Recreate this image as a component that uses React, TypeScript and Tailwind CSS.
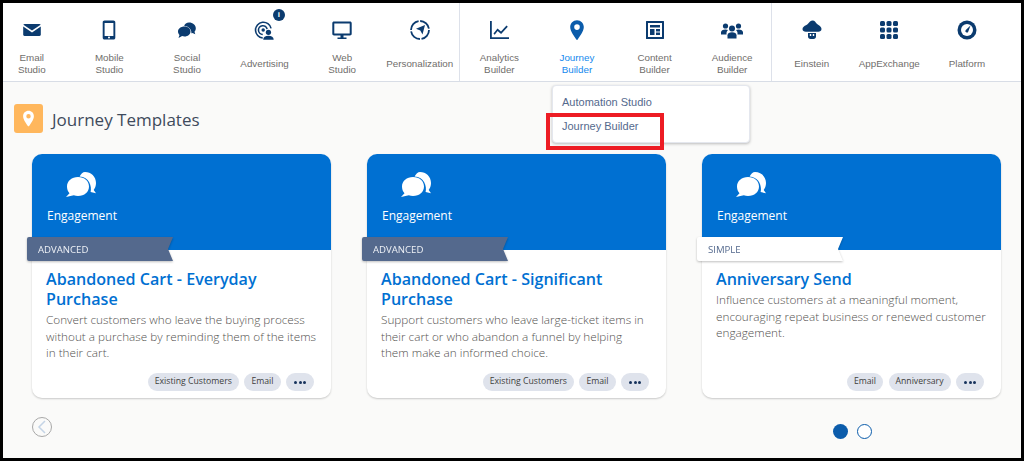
import type { ReactNode } from 'react';

const navy = '#0b3b6f';

function Svg({ children, size = 24 }: { children: ReactNode; size?: number }) {
  return (
    <svg width={size} height={size} viewBox="0 0 24 24" fill={navy}>
      {children}
    </svg>
  );
}

const EmailIcon = () => (
  <Svg size={22}>
    <path d="M4 5.5h16c.8 0 1.2.3 1.4.8L12 12.6 2.6 6.3c.2-.5.6-.8 1.4-.8z" />
    <path d="M2.4 8.2 12 14.7l9.6-6.5v9c0 .8-.6 1.3-1.4 1.3H3.8c-.8 0-1.4-.5-1.4-1.3z" />
  </Svg>
);

const MobileIcon = () => (
  <Svg>
    <path
      fillRule="evenodd"
      d="M7.5 2.5h9c1 0 1.8.8 1.8 1.8v15.4c0 1-.8 1.8-1.8 1.8h-9c-1 0-1.8-.8-1.8-1.8V4.3c0-1 .8-1.8 1.8-1.8zM7.6 5v13h8.8V5zM12 18.6a1 1 0 1 0 0 2 1 1 0 0 0 0-2z"
    />
  </Svg>
);

const SocialIcon = () => (
  <Svg>
    <path d="M9.5 8.5c3.5 0 6 2.2 6 5s-2.5 5-6 5c-.9 0-1.7-.1-2.4-.4L3.5 20l1-3.1C3.5 16 3 14.8 3 13.5c0-2.8 2.8-5 6.5-5z" />
    <path d="M14 4.5c3.8 0 6.8 2.5 6.8 5.7 0 1.5-.5 2.6-1.3 3.5l.8 2.5-2.8-1.3c-.4.2-.7.3-1.1.4.3-2.9-1.7-7-7.2-7.3C9.7 5.8 11.6 4.5 14 4.5z" />
  </Svg>
);

const AdvertisingIcon = () => (
  <Svg size={21}>
    <g fill="none" stroke={navy}>
      <path strokeWidth="1.8" d="M10 20.5a9 9 0 1 1 9.5-11" />
      <path strokeWidth="1.8" d="M10 16.5a5 5 0 1 1 5-6" />
    </g>
    <circle cx="10.5" cy="11.5" r="2" />
    <circle cx="16.5" cy="14" r="3" />
    <path d="M10.5 22.5c0-3 2.5-4.5 6-4.5s6 1.5 6 4.5z" />
  </Svg>
);

const WebIcon = () => (
  <Svg>
    <path
      fillRule="evenodd"
      d="M4 3.5h16c1 0 1.7.7 1.7 1.7v10.6c0 1-.7 1.7-1.7 1.7H4c-1 0-1.7-.7-1.7-1.7V5.2c0-1 .7-1.7 1.7-1.7zM4.3 5.5v10h15.4v-10z"
    />
    <path d="M10.5 17h3v2.500h-3zM7.500 19.500h9V21h-9z" />
  </Svg>
);

const PersonalizationIcon = () => (
  <Svg>
    <circle cx="12" cy="12" r="9" fill="none" stroke={navy} strokeWidth="1.8" strokeDasharray="12.5 1.6" />
    <path d="M17 7l-2.5 9.5-2.2-4-4.3-1.8z" />
  </Svg>
);

const AnalyticsIcon = () => (
  <Svg>
    <path d="M3 3h1.8v16.2H22V21H3z" />
    <path d="m6.5 15.5 4-5 3.5 3 5.5-6 1.3 1.2-6.7 7.3-3.5-3-2.9 3.7z" />
  </Svg>
);

const PinIcon = ({ fill = '#0b5cab', size = 24 }: { fill?: string; size?: number }) => (
  <svg width={size} height={size} viewBox="0 0 24 24" fill={fill}>
    <path
      fillRule="evenodd"
      d="M12 2.2c3.9 0 6.8 3 6.8 6.8 0 4.7-4.6 9.9-6 12.4-.4.6-1.2.6-1.6 0-1.4-2.5-6-7.7-6-12.4 0-3.8 2.9-6.8 6.8-6.8zm0 4.1a2.8 2.8 0 1 0 0 5.6 2.8 2.8 0 0 0 0-5.6z"
    />
  </svg>
);

const ContentIcon = () => (
  <Svg>
    <path
      fillRule="evenodd"
      d="M3.5 3h17c.3 0 .5.2.5.5v17c0 .3-.2.5-.5.5h-17a.5.5 0 0 1-.5-.5v-17c0-.3.2-.5.5-.5zM5 5v14h14V5z"
    />
    <path d="M7 7h10v2.5H7zM7 11h4.5v6H7zM13 11h4v2.5h-4zM13 14.5h4V17h-4z" />
  </Svg>
);

const AudienceIcon = () => (
  <Svg>
    <circle cx="5.5" cy="8" r="2.6" />
    <path d="M1 16.5v-2.3c0-1.5 1.8-2.7 4.5-2.7 1 0 1.8.2 2.5.5-1 .8-1.5 2-1.5 3.2v1.3z" />
    <circle cx="18.5" cy="8" r="2.6" />
    <path d="M23 16.5v-2.3c0-1.5-1.8-2.7-4.5-2.7-1 0-1.8.2-2.5.5 1 .8 1.5 2 1.5 3.2v1.3z" />
    <circle cx="12" cy="10.5" r="3" />
    <path d="M7.5 20.5v-3.3c0-1.7 1.8-2.9 4.5-2.9s4.5 1.2 4.5 2.9v3.3z" />
  </Svg>
);

const EinsteinIcon = () => (
  <Svg>
    <path d="M10 3.5c1.5-1.5 4-1.5 5 0 1 1.5 2 2.5 3.5 3.5 1.5 1 3 2 3 4 0 1.8-1.5 2.8-3.2 2.8H5.8C4 13.8 2.5 12.8 2.5 11c0-1.8 2-3 3.5-3.7 1.8-.9 2.8-2.3 4-3.8z" />
    <path
      fillRule="evenodd"
      d="M8 15h8v3.500c0 1.500-1 2.500-2.500 2.500h-3C9 21 8 20 8 18.500zm1.800 1v2h1.400v-2zm3 0v2h1.400v-2z"
    />
  </Svg>
);

const AppExchangeIcon = () => (
  <svg width="24" height="24" viewBox="0 0 24 24" fill={navy}>
    {[3, 9.5, 16].flatMap(y =>
      [3, 9.5, 16].map(x => <rect key={x + '-' + y} x={x} y={y} width="5" height="5" rx="1.5" />),
    )}
  </svg>
);

const PlatformIcon = () => (
  <Svg>
    <circle cx="12" cy="12" r="9.5" />
    <circle cx="12" cy="12" r="6" fill="#fff" />
    <path d="M15.5 7.5 13.3 13.4a1.5 1.5 0 1 1-2.5-1.5z" />
    <path d="M9 18h6l1.5 1.5h-9z" />
  </Svg>
);

const BubblesIcon = () => (
  <svg width="33" height="28" viewBox="0 0 33 28" fill="#fff">
    <path d="M20 1c6 0 11 4.5 11 11 0 3-1 5.3-2.3 7l2.3 3.3-5.4-1.200c1.500-6-1.500-15-11-15.600C16 3 17.800 1 20 1z" />
    <path d="M13 6c6.500 0 11 4 11 9.500S19.500 25 13 25c-1.500 0-3-.2-4.200-.7L1 26l3.500-3.700C2.800 20.500 2 18 2 15.500 2 10 6.800 6 13 6z" />
  </svg>
);

type NavEntry = { label: string[]; icon: ReactNode; badge?: boolean; active?: boolean };

const nav1: NavEntry[] = [
  { label: ['Email', 'Studio'], icon: <EmailIcon /> },
  { label: ['Mobile', 'Studio'], icon: <MobileIcon /> },
  { label: ['Social', 'Studio'], icon: <SocialIcon /> },
  { label: ['Advertising'], icon: <AdvertisingIcon />, badge: true },
  { label: ['Web', 'Studio'], icon: <WebIcon /> },
  { label: ['Personalization'], icon: <PersonalizationIcon /> },
];
const nav2: NavEntry[] = [
  { label: ['Analytics', 'Builder'], icon: <AnalyticsIcon /> },
  { label: ['Journey', 'Builder'], icon: <PinIcon />, active: true },
  { label: ['Content', 'Builder'], icon: <ContentIcon /> },
  { label: ['Audience', 'Builder'], icon: <AudienceIcon /> },
];
const nav3: NavEntry[] = [
  { label: ['Einstein'], icon: <EinsteinIcon /> },
  { label: ['AppExchange'], icon: <AppExchangeIcon /> },
  { label: ['Platform'], icon: <PlatformIcon /> },
];

function NavItem({ item }: { item: NavEntry }) {
  return (
    <div className="relative flex w-[77.6px] shrink-0 flex-col items-center pt-[15px]">
      <div className="flex h-6 items-center justify-center">{item.icon}</div>
      {item.badge && (
        <div className="absolute left-[47px] top-[6px] flex h-3 w-3 items-center justify-center rounded-full bg-[#0b3b6f] text-[8px] font-bold leading-none text-white">
          i
        </div>
      )}
      <div
        className={
          'mt-[9px] flex h-[26px] flex-col justify-center text-center text-[9.8px] leading-[12.5px] whitespace-nowrap ' +
          (item.active ? 'text-[#1589ee]' : 'text-[#706e6b]')
        }
      >
        {item.label.map(l => (
          <span key={l}>{l}</span>
        ))}
      </div>
    </div>
  );
}

function Ribbon({ kind }: { kind: 'ADVANCED' | 'SIMPLE' }) {
  const advanced = kind === 'ADVANCED';
  return (
    <div className="absolute left-[-5px] top-[83px] h-[24px] w-[146px] drop-shadow-[0_1px_1px_rgba(0,0,0,0.25)]">
      <svg className="absolute inset-0" width="146" height="24" viewBox="0 0 146 24">
        <path d="M2 0H146L141 12L146 24H2Q0 24 0 22V2Q0 0 2 0Z" fill={advanced ? '#54698d' : '#ffffff'} />
      </svg>
      <span
        className={
          'absolute left-[11px] top-[6px] text-[9.6px] leading-[14px] ' +
          (advanced ? 'text-[#eef1f6]' : 'text-[#54698d]')
        }
      >
        {kind}
      </span>
    </div>
  );
}

function Chip({ children }: { children: ReactNode }) {
  return (
    <span className="flex h-[18px] items-center rounded-full bg-[#dfe3ec] px-[7px] text-[8.7px] text-[#3e3e3c]">
      {children}
    </span>
  );
}

function MoreChip() {
  return (
    <span className="flex h-[18px] w-7 items-center justify-center gap-[1.5px] rounded-full bg-[#dfe3ec]">
      <i className="h-[3px] w-[3px] rounded-full bg-[#16325c]" />
      <i className="h-[3px] w-[3px] rounded-full bg-[#16325c]" />
      <i className="h-[3px] w-[3px] rounded-full bg-[#16325c]" />
    </span>
  );
}

const cards = [
  {
    ribbon: 'ADVANCED' as const,
    title: 'Abandoned Cart - Everyday Purchase',
    text: 'Convert customers who leave the buying process without a purchase by reminding them of the items in their cart.',
    chips: ['Existing Customers', 'Email'],
  },
  {
    ribbon: 'ADVANCED' as const,
    title: 'Abandoned Cart - Significant Purchase',
    text: 'Support customers who leave large-ticket items in their cart or who abandon a funnel by helping them make an informed choice.',
    chips: ['Existing Customers', 'Email'],
  },
  {
    ribbon: 'SIMPLE' as const,
    title: 'Anniversary Send',
    text: 'Influence customers at a meaningful moment, encouraging repeat business or renewed customer engagement.',
    chips: ['Email', 'Anniversary'],
  },
];

export default function App() {
  return (
    <div className="relative h-[461px] w-[1024px] overflow-hidden border-[3px] border-black bg-[#fafaf9] font-['Open_Sans',sans-serif]">
      {/* Top nav */}
      <div className="flex h-[79px] border-b border-[#d8dde6] bg-white font-['Liberation_Sans',sans-serif]">
        <div className="ml-[-10px] flex h-[78px] border-r border-[#dde1ea]">
          {nav1.map(i => (
            <NavItem key={i.label[0]} item={i} />
          ))}
        </div>
        <div className="ml-px flex h-[78px] border-r border-[#dde1ea]">
          {nav2.map(i => (
            <NavItem key={i.label[0]} item={i} />
          ))}
        </div>
        <div className="ml-px flex">
          {nav3.map(i => (
            <NavItem key={i.label[0]} item={i} />
          ))}
        </div>
      </div>

      {/* Dropdown */}
      <div className="absolute left-[549px] top-[82px] z-10 h-[58px] w-[198px] rounded border border-[#e4e7ee] bg-white pl-[9px] pt-[4px] font-['Liberation_Sans',sans-serif] text-[11px] leading-[24px] text-[#54698d] shadow-[0_1px_3px_rgba(0,0,0,0.25)]">
        <div>Automation Studio</div>
        <div>Journey Builder</div>
      </div>
      <div className="absolute left-[543px] top-[110px] z-20 h-[37px] w-[118px] border-[4px] border-[#ed1c24]" />

      {/* Page header */}
      <div className="ml-[11px] mt-[22px] flex items-center gap-[9px]">
        <div className="flex h-[29px] w-[29px] items-center justify-center rounded-[3px] bg-[#ffb75d]">
          <PinIcon fill="#ffffff" size={19} />
        </div>
        <h1 className="pt-[2px] text-[17px] leading-[24px] text-[#3e4a5c]">Journey Templates</h1>
      </div>

      {/* Cards */}
      <div className="ml-[29px] mt-[21px] flex gap-[36px]">
        {cards.map(c => (
          <div
            key={c.title}
            className="relative flex h-[244px] w-[299px] flex-col rounded-[10px] bg-white shadow-[0_1px_2px_rgba(0,0,0,0.2)]"
          >
            <div className="h-[96px] rounded-t-[10px] bg-[#0070d2] pl-[15px] pt-[17px]">
              <div className="ml-[18px]">
                <BubblesIcon />
              </div>
              <div className="mt-[8px] text-[12px] leading-[18px] text-white">Engagement</div>
            </div>
            <Ribbon kind={c.ribbon} />
            <div className="flex flex-1 flex-col px-[14px] pt-[19px]">
              <h2 className="text-[16.1px] font-semibold leading-[20px] text-[#0070d2]">{c.title}</h2>
              <p className="mt-[2px] text-[11.75px] font-light leading-[16.5px] text-[#54524f]">{c.text}</p>
              <div className="mb-[7px] mr-[3px] mt-auto flex justify-end gap-[5.5px]">
                {c.chips.map(ch => (
                  <Chip key={ch}>{ch}</Chip>
                ))}
                <MoreChip />
              </div>
            </div>
          </div>
        ))}
      </div>

      {/* Carousel controls */}
      <div className="ml-[29px] mt-[19px] flex items-start justify-between">
        <div className="flex h-5 w-5 items-center justify-center rounded-full border border-[#a8a8a8]">
          <svg width="10" height="14" viewBox="0 0 10 14" fill="none" stroke="#c4d4e6" strokeWidth="1.5">
            <path d="M8 1 2 7l6 6" />
          </svg>
        </div>
        <div className="mr-[149px] mt-[7px] flex gap-[9px]">
          <div className="h-[15px] w-[15px] rounded-full bg-[#0b5cab]" />
          <div className="h-[15px] w-[15px] rounded-full border border-[#0b5cab] bg-white" />
        </div>
      </div>
    </div>
  );
}
